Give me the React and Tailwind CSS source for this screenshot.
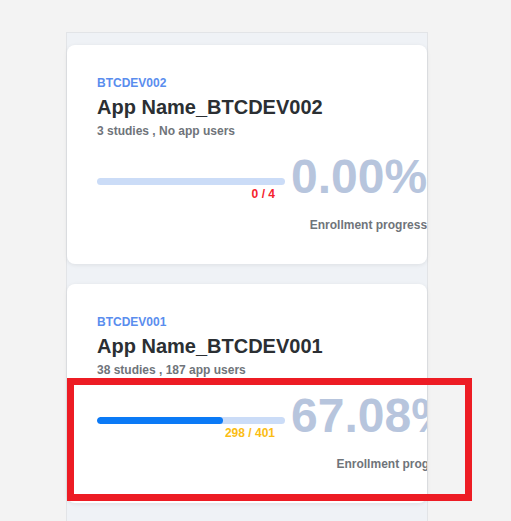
import React from "react";

const apps = [
  {
    code: "BTCDEV002",
    name: "App Name_BTCDEV002",
    meta: "3 studies , No app users",
    done: 0,
    total: 4,
    pct: 0,
    countColor: "text-[#f5222d]",
  },
  {
    code: "BTCDEV001",
    name: "App Name_BTCDEV001",
    meta: "38 studies , 187 app users",
    done: 298,
    total: 401,
    pct: 67.08,
    countColor: "text-[#fbbd14]",
  },
];

const AppCard = ({ app }) => {
  return (
    <div className="bg-white rounded-lg shadow-[0_1px_4px_rgba(0,0,0,0.08)] overflow-hidden pl-[30px] pt-[31px] h-[219px]">
      <div className="text-[12px] leading-[14px] font-bold text-[#5a8dee]">
        {app.code}
      </div>
      <div className="text-[20px] leading-[22px] font-bold text-[#2b2f33] mt-[6px]">
        {app.name}
      </div>
      <div className="text-[12px] leading-[14px] font-bold text-[#6f747a] mt-[6px]">
        {app.meta}
      </div>
      <div className="flex mt-[15px]">
        <div className="w-[188px] shrink-0 pt-[25px]">
          <div className="h-[7px] rounded-full bg-[#cbdcf7] overflow-hidden">
            <div
              className="h-full rounded-full bg-[#0b7af6]"
              style={{ width: app.pct + "%" }}
            />
          </div>
          <div
            className={`text-[12px] leading-[14px] font-bold text-right pr-[10px] mt-[2px] ${app.countColor}`}
          >
            {app.done} / {app.total}
          </div>
        </div>
        <div className="flex flex-col items-end shrink-0 ml-[6px]">
          <div className="text-[48px] leading-[48px] font-bold text-[#b7c5dd] whitespace-nowrap">
            {app.pct.toFixed(2)}%
          </div>
          <div className="text-[12px] leading-[14px] font-bold text-[#6f747a] whitespace-nowrap mt-[17px]">
            Enrollment progress
          </div>
        </div>
      </div>
    </div>
  );
};

const App = () => {
  return (
    <div className="relative min-h-[521px] bg-[#f3f3f3] font-['Liberation_Sans',Arial,sans-serif] pt-[32px] pl-[66px] overflow-hidden">
      <div className="w-[362px] h-[500px] border-l border-t border-r border-[#e2e4e7] bg-[#eff2f6] pt-[12px] flex flex-col gap-[20px]">
        {apps.map((app) => (
          <AppCard key={app.code} app={app} />
        ))}
      </div>
      <div className="absolute left-[67px] top-[378px] w-[405px] h-[123px] border-[7px] border-[#ed1c24] pointer-events-none" />
    </div>
  );
};

export default App;
